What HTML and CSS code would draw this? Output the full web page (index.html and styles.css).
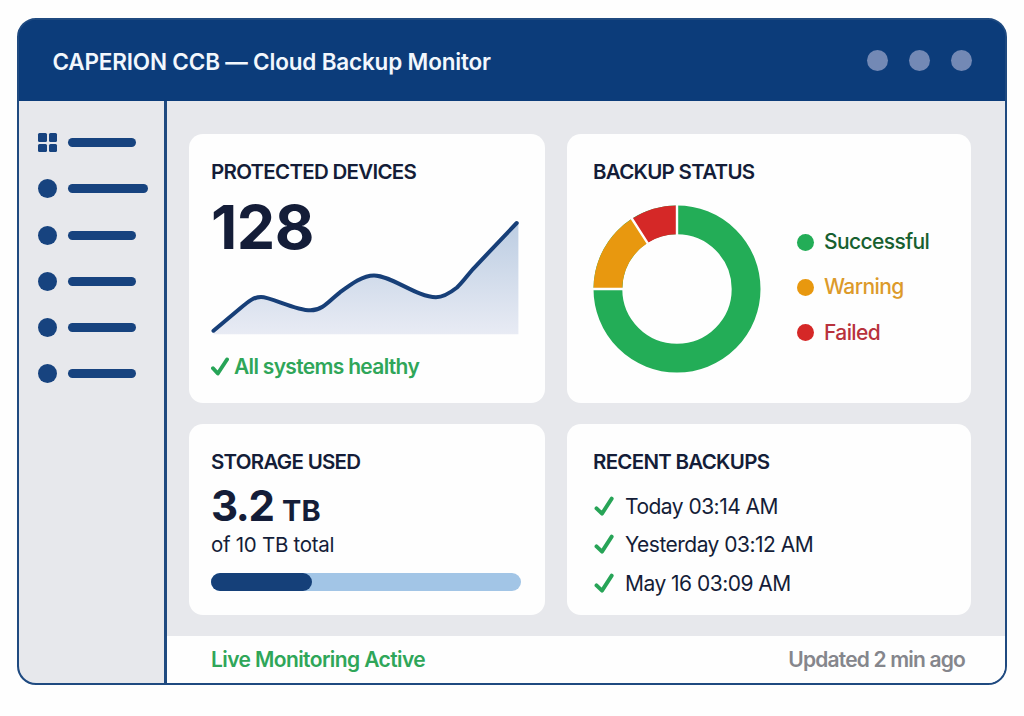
FILE: index.html
```html
<!DOCTYPE html>
<html lang="en">
<head>
  <meta charset="UTF-8">
  <meta name="viewport" content="width=device-width, initial-scale=1.0">
  <title>CAPERION CCB — Cloud Backup Monitor</title>
  <link rel="stylesheet" href="styles.css">
</head>
<body>
  <div class="window">
    <header class="header">
      <h1>CAPERION CCB — Cloud Backup Monitor</h1>
      <div class="window-dots"><span></span><span></span><span></span></div>
    </header>
    <div class="layout">
      <nav class="sidebar">
        <div class="nav-item"><div class="nav-grid"><i></i><i></i><i></i><i></i></div><div class="nav-bar"></div></div>
        <div class="nav-item"><div class="nav-dot"></div><div class="nav-bar long"></div></div>
        <div class="nav-item"><div class="nav-dot"></div><div class="nav-bar"></div></div>
        <div class="nav-item"><div class="nav-dot"></div><div class="nav-bar"></div></div>
        <div class="nav-item"><div class="nav-dot"></div><div class="nav-bar"></div></div>
        <div class="nav-item"><div class="nav-dot"></div><div class="nav-bar"></div></div>
      </nav>
      <div class="content">
        <main class="dashboard">
          <section class="card">
            <h2>PROTECTED DEVICES</h2>
            <div class="trend">
              <div class="big-number">128</div>
              <svg class="chart" width="310" height="120" viewBox="0 0 310 120">
                <defs>
                  <linearGradient id="area" x1="0" y1="0" x2="0" y2="1">
                    <stop offset="0" stop-color="#bccde2"/>
                    <stop offset="1" stop-color="#e8ebf4"/>
                  </linearGradient>
                </defs>
                <path fill="url(#area)" d="M2.5 115.7L29 93.5C38 86 43 81.9 50 81.9C60 81.9 84 95.3 99.5 95.3C112 95.3 119 85 129 77.3C141 68.5 152 60.4 163 60.4C180 60.4 206 82.3 225 82.3C232 82.3 239 78 246 72.5C251 68 256 61 262 54L307.4 7V119.3H2.5Z"/>
                <path class="line" d="M2.5 115.7L29 93.5C38 86 43 81.9 50 81.9C60 81.9 84 95.3 99.5 95.3C112 95.3 119 85 129 77.3C141 68.5 152 60.4 163 60.4C180 60.4 206 82.3 225 82.3C232 82.3 239 78 246 72.5C251 68 256 61 262 54L305.7 8"/>
              </svg>
            </div>
            <div class="healthy">
              <svg class="check" width="18" height="20" viewBox="0 0 18 20"><path d="M2 11.3L6.8 16.5L16 2.5"/></svg>
              <span>All systems healthy</span>
            </div>
          </section>

          <section class="card card-right">
            <h2>BACKUP STATUS</h2>
            <div class="status">
              <svg class="donut" width="168" height="168" viewBox="-84 -84 168 168">
                <circle class="ok" r="69.1"/>
                <path class="warn" d="M-69.1 0A69.1 69.1 0 0 1 -37.3 -58.15"/>
                <path class="fail" d="M-37.3 -58.15A69.1 69.1 0 0 1 0 -69.1"/>
                <path class="gap" d="M0 -50V-86M-50 0H-86M-27 -42.1L-46.5 -72.5"/>
              </svg>
              <ul class="legend">
                <li class="successful">Successful</li>
                <li class="warning">Warning</li>
                <li class="failed">Failed</li>
              </ul>
            </div>
          </section>

          <section class="card">
            <h2>STORAGE USED</h2>
            <div class="storage">3.2 <small>TB</small></div>
            <div class="storage-total">of 10 TB total</div>
            <div class="progress"><div class="progress-fill"></div></div>
          </section>

          <section class="card card-right">
            <h2>RECENT BACKUPS</h2>
            <ul class="backups">
              <li><svg class="check" width="21" height="22" viewBox="0 0 21 22"><path d="M3.5 12.4L9 17.6L18.7 2.6"/></svg>Today 03:14 AM</li>
              <li><svg class="check" width="21" height="22" viewBox="0 0 21 22"><path d="M3.5 12.4L9 17.6L18.7 2.6"/></svg>Yesterday 03:12 AM</li>
              <li><svg class="check" width="21" height="22" viewBox="0 0 21 22"><path d="M3.5 12.4L9 17.6L18.7 2.6"/></svg>May 16 03:09 AM</li>
            </ul>
          </section>
        </main>
        <footer class="footer">
          <span class="live">Live Monitoring Active</span>
          <span class="updated">Updated 2 min ago</span>
        </footer>
      </div>
    </div>
  </div>
</body>
</html>
```
FILE: styles.css
```css
* {
  box-sizing: border-box;
}
body {
  margin: 0;
  padding: 18px 17px;
  background: #fefefe;
  color: #141d38;
  font-family: Inter, "Liberation Sans", sans-serif;
  font-size: 21px;
  line-height: 24px;
  letter-spacing: -0.52px;
}
h1, h2, ul {
  margin: 0;
  padding: 0;
}
ul {
  list-style: none;
}
.window {
  display: flex;
  flex-direction: column;
  width: 990px;
  height: 667px;
  border: 2px solid #1f4a80;
  border-radius: 19px;
  background: #0c3c7a;
  overflow: hidden;
}
.header {
  display: flex;
  justify-content: space-between;
  align-items: center;
  height: 81px;
  padding: 0 33px 0 33.5px;
  background: #0c3c7a;
}
.header h1 {
  padding-top: 2px;
  color: #f2f7fd;
  font-size: 22.5px;
  font-weight: 600;
  line-height: 28px;
  letter-spacing: -0.18px;
}
.window-dots {
  display: flex;
  gap: 21px;
}
.window-dots span {
  width: 21px;
  height: 21px;
  border-radius: 50%;
  background: #7389b5;
}
.layout {
  display: flex;
  flex: 1;
}
.sidebar {
  display: flex;
  flex-direction: column;
  gap: 27.1px;
  width: 148px;
  padding: 32.4px 0 0 19px;
  border-right: 3px solid #1f4a80;
  background: #e7e8ec;
}
.nav-item {
  display: flex;
  align-items: center;
  gap: 11px;
  height: 19px;
}
.nav-dot {
  width: 19px;
  height: 19px;
  border-radius: 50%;
  background: #17437f;
}
.nav-grid {
  display: grid;
  grid-template-columns: 1fr 1fr;
  gap: 2px;
  width: 19px;
  height: 19px;
}
.nav-grid i {
  border-radius: 1.5px;
  background: #17437f;
}
.nav-bar {
  width: 68px;
  height: 9px;
  border-radius: 5px;
  background: #17437f;
}
.nav-bar.long {
  width: 80px;
}
.content {
  flex: 1;
  display: flex;
  flex-direction: column;
  background: #e7e8ec;
}
.dashboard {
  flex: 1;
  display: grid;
  grid-template-columns: 356px 404px;
  grid-template-rows: 269px 191px;
  gap: 21px 22px;
  padding: 33px 0 0 22px;
}
.card {
  padding: 26px 22px 0;
  border-radius: 14px;
  background: #fefefe;
}
.card-right {
  padding-left: 26px;
}
.card h2 {
  font-size: 20.5px;
  font-weight: 600;
  line-height: 24px;
  letter-spacing: -0.72px;
}
.trend {
  display: grid;
  height: 138px;
  margin-top: 13px;
}
.trend > * {
  grid-area: 1 / 1;
}
.big-number {
  font-size: 61px;
  font-weight: 700;
  line-height: 60px;
}
.chart {
  align-self: end;
}
.chart .line {
  fill: none;
  stroke: #173f78;
  stroke-width: 4;
  stroke-linecap: round;
}
.check {
  fill: none;
  stroke: #27a457;
  stroke-width: 3.9;
  stroke-linecap: round;
  stroke-linejoin: round;
}
.healthy {
  display: flex;
  align-items: center;
  gap: 5px;
  margin-top: 20px;
  color: #2fa659;
  font-weight: 600;
  letter-spacing: -0.68px;
}
.status {
  display: flex;
  align-items: center;
  margin-top: 21px;
}
.donut {
  fill: none;
  stroke-width: 28.8;
}
.donut .ok {
  stroke: #23ad57;
}
.donut .warn {
  stroke: #e8980f;
}
.donut .fail {
  stroke: #d52827;
}
.donut .gap {
  stroke: #fefefe;
  stroke-width: 2.4;
}
.legend {
  margin: -3px 0 0 36px;
}
.legend li {
  display: flex;
  align-items: center;
  gap: 10px;
  height: 45.3px;
  font-weight: 500;
  letter-spacing: -0.6px;
}
.legend li::before {
  content: "";
  width: 17px;
  height: 17px;
  border-radius: 50%;
}
.legend .successful {
  color: #17602f;
}
.legend .successful::before {
  background: #23ad57;
}
.legend .warning {
  color: #dc9a2a;
}
.legend .warning::before {
  background: #e8980f;
}
.legend .failed {
  color: #b8323c;
}
.legend .failed::before {
  background: #d52827;
}
.storage {
  margin-top: 10px;
  font-size: 42px;
  font-weight: 700;
  line-height: 44px;
  letter-spacing: -1.4px;
}
.storage small {
  font-size: 29px;
  letter-spacing: 0;
}
.storage-total {
  font-size: 20.5px;
  letter-spacing: -0.28px;
}
.progress {
  width: 310px;
  height: 18px;
  margin-top: 16px;
  border-radius: 9px;
  background: #a2c5e6;
}
.progress-fill {
  width: 101px;
  height: 18px;
  border-radius: 9px;
  background: #154079;
}
.backups {
  margin-top: 14px;
}
.backups li {
  display: flex;
  align-items: center;
  gap: 11px;
  height: 38.3px;
}
.footer {
  display: flex;
  justify-content: space-between;
  align-items: center;
  height: 47px;
  padding: 1px 40px 0 44px;
  background: #fefefe;
}
.live {
  color: #2fa659;
  font-weight: 600;
  letter-spacing: -0.6px;
}
.updated {
  color: #85868c;
  font-weight: 600;
  letter-spacing: -0.82px;
}
```
